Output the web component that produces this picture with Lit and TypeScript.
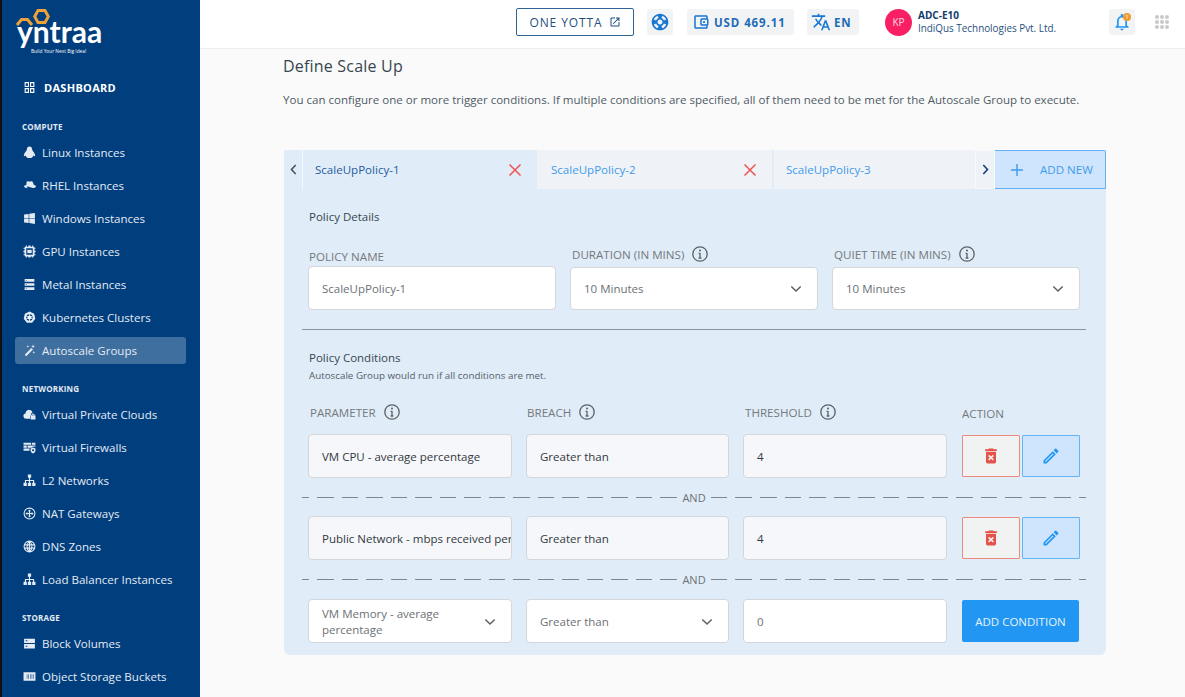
import { LitElement, css, html, svg } from 'lit';
import { customElement } from 'lit/decorators.js';

const ICONS: Record<string, unknown> = {
  linux: svg`<path d="M12 1c-3 0-4.800 2.200-4.800 5 0 1.500-.7 2.500-2 4C3.500 12 2 14.500 1.500 17.500c-.2 1.300.8 1.800 1.700 1.100l1.600-1.100c.6 2 2.200 3.500 4 4.500h6.400c1.800-1 3.400-2.500 4-4.500l1.600 1.100c.9.7 1.900.2 1.700-1.100-.5-3-2-5.500-3.700-7.500-1.300-1.500-2-2.500-2-4 0-2.800-1.800-5-4.800-5z"/>`,
  rhel: svg`<path d="M8 4c1.500 0 2.700.8 4 .8S14.500 4 16 4c2 0 3 3 3.500 6 2.500 1 4.500 2.300 4.500 4 0 2-3 3-6 2.500-3-.5-6-2-9-2.600-1.500-.3-2.200.1-2.200.8 0 1 1.500 2 3.200 2.500-4.500.3-8-1.300-8-3.700 0-1.500 2-2.200 4-2C6.500 8 6.500 4 8 4z"/>`,
  windows: svg`<path d="M2 4.800l8.500-1.200v7.900H2zM11.600 3.400L22 2v9.500H11.600zM2 12.600h8.500v7.900L2 19.300zM11.600 12.600H22V22l-10.400-1.500z"/>`,
  gpu: svg`<path fill-rule="evenodd" d="M5 1h2v2h3V1h4v2h3V1h2v2a2 2 0 012 2h2v2h-2v3h2v4h-2v3h2v2h-2a2 2 0 01-2 2v2h-2v-2h-3v2h-4v-2H7v2H5v-2a2 2 0 01-2-2H1v-2h2v-3H1v-4h2V7H1V5h2a2 2 0 012-2V1zm1 5v12h12V6H6z"/><rect x="8" y="9" width="8" height="6"/>`,
  metal: svg`<path d="M3 2h18v5H3zM3 9.500h18v5H3zM3 17h18v5H3z"/><path fill="#003e7e" d="M5 4h2v1H5zM5 11.500h2v1H5zM5 19h2v1H5z"/>`,
  k8s: svg`<path fill-rule="evenodd" d="M12 1l8.600 4.100 2.100 9.300-5.900 7.500H7.200l-5.900-7.500 2.100-9.300L12 1zm0 5a6 6 0 100 12 6 6 0 000-12z"/><path d="M12 8.200a3.800 3.800 0 100 7.600 3.800 3.800 0 000-7.600z"/><path stroke="#fff" stroke-width="1.300" d="M12 5v14M5.500 9l13 6M18.500 9l-13 6"/>`,
  wand: svg`<path d="M15.500 7.500l2.800 2.800L6 22.600l-2.800-2.800zM18.500 1l1 2.500 2.500 1-2.500 1-1 2.500-1-2.500-2.500-1 2.500-1zM9 2l.7 1.800 1.800.7-1.800.7L9 7l-.7-1.800-1.800-.7 1.800-.7zM20 13l.7 1.800 1.800.7-1.800.7L20 18l-.7-1.800-1.800-.7 1.800-.7z"/>`,
  cloud: svg`<path d="M11 3a7 7 0 016.700 5 5 5 0 00-3.200 5.500 4 4 0 00-1.500 3V20H6a5 5 0 01-1.200-9.900A7 7 0 0111 3z"/><path d="M18.500 10a3 3 0 013 3v1h1.500v7H14v-7h1.500v-1a3 3 0 013-3zm0 1.800a1.300 1.300 0 00-1.300 1.300v.9h2.600v-.9a1.300 1.300 0 00-1.300-1.300z"/>`,
  firewall: svg`<path d="M1 3h14v4H1zM16.500 3H23v4h-6.500zM1 8.500h6v4H1zM8.500 8.500H23v2a6 6 0 00-7 2H8.500zM1 14h11.500a6 6 0 00-.5 4H1z"/><path fill-rule="evenodd" d="M18.500 12l4.500 2v3.500c0 2.600-2 4.700-4.500 5.500-2.500-.8-4.500-2.900-4.500-5.500V14l4.500-2zm0 3a2 2 0 100 4 2 2 0 000-4z"/>`,
  sitemap: svg`<path d="M9 1h6v6h-2v4h7.500v5H23v6h-6v-6h1.500v-3h-5.500v3h2v6H9v-6h2v-3H5.500v3H7v6H1v-6h2.500v-5H11V7H9z"/>`,
  nat: svg`<path fill-rule="evenodd" d="M12 1a11 11 0 110 22 11 11 0 010-22zm0 2a9 9 0 100 18 9 9 0 000-18z"/><path d="M12 4.500L15 8h-2v3h3V9l3.500 3-3.500 3v-2h-3v3h2l-3 3.500L9 16h2v-3H8v2l-3.500-3L8 9v2h3V8H9z"/>`,
  globe: svg`<path fill="none" stroke="currentColor" stroke-width="2" d="M12 2a10 10 0 100 20 10 10 0 000-20zM12 2c-6 5-6 15 0 20M12 2c6 5 6 15 0 20M2.500 9h19M2.500 15h19M12 2v20"/>`,
  block: svg`<path fill-rule="evenodd" d="M2 3h20v8H2zm3 3v2h3V6zM2 13h20v8H2zm3 3v2h3v-2z"/>`,
  bucket: svg`<path fill-rule="evenodd" d="M1 4h22v16H1zm6 4v8h1V8zm3 0v8h1V8zm3 0v8h1V8zm3 0v8h1V8zm3 0v8h1V8z"/>`,
  dash: svg`<path fill-rule="evenodd" d="M3 2h8v9H3zm2 2v5h4V4zM13 2h8v9h-8zm2 2v5h4V4zM3 13h8v9H3zm2 2v5h4v-5zM13 13h8v9h-8zm2 2v5h4v-5z"/>`,
};

const SECTIONS = [
  {
    title: 'COMPUTE',
    items: [
      ['linux', 'Linux Instances'],
      ['rhel', 'RHEL Instances'],
      ['windows', 'Windows Instances'],
      ['gpu', 'GPU Instances'],
      ['metal', 'Metal Instances'],
      ['k8s', 'Kubernetes Clusters'],
      ['wand', 'Autoscale Groups'],
    ],
  },
  {
    title: 'NETWORKING',
    items: [
      ['cloud', 'Virtual Private Clouds'],
      ['firewall', 'Virtual Firewalls'],
      ['sitemap', 'L2 Networks'],
      ['nat', 'NAT Gateways'],
      ['globe', 'DNS Zones'],
      ['sitemap', 'Load Balancer Instances'],
    ],
  },
  {
    title: 'STORAGE',
    items: [
      ['block', 'Block Volumes'],
      ['bucket', 'Object Storage Buckets'],
    ],
  },
];

const icon = (name: string) => html`<svg class="nav-icon" viewBox="0 0 24 24" fill="currentColor">${ICONS[name]}</svg>`;

const infoIcon = html`<svg class="info" viewBox="0 0 16 16" fill="none" stroke="currentColor">
  <circle cx="8" cy="8" r="7.200" stroke-width="1.300"></circle>
  <path d="M8 7v5M6.600 7.300H8M6.600 12h2.800" stroke-width="1.300"></path>
  <circle cx="8" cy="4.500" r="1" fill="currentColor" stroke="none"></circle>
</svg>`;

const chevron = html`<svg class="chevron" viewBox="0 0 12 8" fill="none" stroke="currentColor" stroke-width="1.500">
  <path d="M1.300 1.500L6 6l4.700-4.500"></path>
</svg>`;

const closeIcon = html`<svg class="close" viewBox="0 0 14 14" fill="none" stroke="currentColor" stroke-width="1.500">
  <path d="M1.500 1.500l11 11M12.500 1.500l-11 11"></path>
</svg>`;

const trashIcon = html`<svg viewBox="0 0 24 24" width="20" height="20" fill="currentColor">
  <path d="M6 19c0 1.100.9 2 2 2h8c1.100 0 2-.9 2-2V7H6v12zm2.460-7.120l1.410-1.410L12 12.590l2.120-2.120 1.410 1.410L13.410 14l2.120 2.120-1.410 1.410L12 15.410l-2.120 2.120-1.410-1.410L10.590 14l-2.130-2.120zM15.500 4l-1-1h-5l-1 1H5v2h14V4z"></path>
</svg>`;

const editIcon = html`<svg viewBox="0 0 24 24" width="20" height="20" fill="currentColor">
  <path d="M3 17.250V21h3.750L17.810 9.940l-3.750-3.750L3 17.250zM5.920 19H5v-.92l9.060-9.060.92.92L5.920 19zM20.710 7.040c.39-.39.39-1.020 0-1.410l-2.340-2.340c-.2-.2-.45-.29-.71-.29s-.51.1-.7.29l-1.830 1.830 3.750 3.750 1.830-1.830z"></path>
</svg>`;

@customElement('app-root')
export class AppRoot extends LitElement {
  static styles = css`
    :host {
      display: block;
      height: 697px;
      overflow: hidden;
      font-family: 'Open Sans', sans-serif;
      background: #fafafa;
    }
    .page {
      display: flex;
      height: 697px;
    }

    /* sidebar */
    .sidebar {
      flex: 0 0 198px;
      display: flex;
      flex-direction: column;
      border-left: 2px solid #111;
      background: #003e7e;
      color: #e4ebf3;
      overflow: hidden;
    }
    .sidebar > * {
      flex: none;
    }
    .logo {
      height: 70px;
      padding: 8px 0 0 13px;
      box-sizing: border-box;
    }
    .logo-mark {
      position: relative;
      width: 90px;
      height: 50px;
    }
    .logo-mark svg {
      display: block;
    }
    .logo-text {
      position: absolute;
      left: 2px;
      top: 8px;
      font-family: Lato, sans-serif;
      font-size: 30px;
      font-weight: 700;
      line-height: 30px;
      color: #fff;
    }
    .logo-tag {
      position: absolute;
      left: 16px;
      top: 40px;
      font-size: 4.800px;
      line-height: 6px;
      color: #fff;
      white-space: nowrap;
    }
    .dash-row {
      display: flex;
      align-items: center;
      gap: 8px;
      height: 34px;
      margin-bottom: 1px;
      padding-left: 21px;
      font-size: 11px;
      font-weight: 700;
      color: #fff;
      letter-spacing: 0.300px;
    }
    .section {
      margin: 15px 0 2px 20px;
      height: 14px;
      line-height: 14px;
      font-size: 8px;
      font-weight: 700;
      color: #e4ebf3;
      letter-spacing: 0.200px;
    }
    .item {
      display: flex;
      align-items: center;
      gap: 6px;
      height: 27px;
      margin: 3px 14px 3px 13px;
      padding-left: 8px;
      border-radius: 3px;
      font-size: 11.550px;
      white-space: nowrap;
    }
    .item.active {
      background: #3f6f9f;
    }
    .nav-icon {
      flex: none;
      width: 13px;
      height: 13px;
    }

    /* top bar */
    .content {
      flex: 1;
      min-width: 0;
      display: flex;
      flex-direction: column;
    }
    .topbar {
      flex: 0 0 49px;
      box-sizing: border-box;
      display: flex;
      align-items: center;
      padding: 0 16px 4px 316px;
      background: #fff;
      border-bottom: 1px solid #eeeeee;
    }
    .one-yotta {
      display: flex;
      align-items: center;
      justify-content: center;
      gap: 6px;
      box-sizing: border-box;
      width: 118px;
      height: 28px;
      border: 1px solid #2f6395;
      border-radius: 2px;
      color: #1f4f80;
      font-size: 12px;
      letter-spacing: 0.900px;
    }
    .chip {
      display: flex;
      align-items: center;
      justify-content: center;
      gap: 5px;
      height: 26px;
      margin-left: 13px;
      border-radius: 3px;
      background: #f1f3f4;
      color: #1976d2;
      font-size: 11.500px;
      font-weight: 700;
      letter-spacing: 0.900px;
    }
    .chip.square {
      width: 26px;
    }
    .chip.usd {
      box-sizing: border-box;
      width: 107px;
      margin-left: 14px;
      justify-content: flex-start;
      gap: 4px;
      padding-left: 5px;
      color: #1f6cb5;
    }
    .chip.lang {
      width: 52px;
      box-sizing: border-box;
      justify-content: flex-start;
      gap: 3px;
      padding-left: 4px;
      color: #1f6cb5;
    }
    .avatar {
      flex: none;
      width: 27px;
      height: 27px;
      margin-left: 26px;
      border-radius: 50%;
      background: #f91f64;
      color: #ffd5e2;
      font-size: 10px;
      line-height: 27px;
      text-align: center;
    }
    .user {
      width: 191px;
      margin-left: 6px;
      color: #1f4f80;
      font-size: 9.900px;
      line-height: 13px;
      white-space: nowrap;
    }
    .user b {
      display: block;
      color: #0e3c6e;
      font-size: 10px;
    }
    .bell {
      position: relative;
      margin-left: 0;
      color: #2196f3;
    }
    .badge {
      position: absolute;
      top: 4px;
      right: 4px;
      width: 8px;
      height: 8px;
      border-radius: 50%;
      background: #f39a2c;
      color: #fff;
      font-size: 6px;
      font-weight: 400;
      letter-spacing: 0;
      line-height: 8px;
      text-align: center;
    }
    .apps {
      display: grid;
      grid-template-columns: repeat(3, 4px);
      grid-auto-rows: 4px;
      gap: 1px;
      margin-left: 20px;
    }
    .apps i {
      border-radius: 50%;
      background: #c9c9c9;
    }

    /* main */
    main {
      flex: 1;
      padding: 0 79px 0 83px;
      color: #2e3b49;
    }
    h1 {
      margin: 6px 0 0;
      font-size: 16px;
      line-height: 22px;
      font-weight: 400;
      color: #37474f;
      letter-spacing: 0.200px;
    }
    .lead {
      margin: 15px 0 0;
      font-size: 11.540px;
      line-height: 16px;
      color: #4f5b66;
      white-space: nowrap;
    }
    .card {
      margin: 42px 0 0 1px;
      height: 505px;
      border-radius: 0 0 6px 6px;
      background: #e0ecf8;
    }
    .tabs {
      display: flex;
      height: 39px;
      font-size: 11.550px;
    }
    .arrow {
      flex: none;
      display: flex;
      align-items: center;
      justify-content: center;
      box-sizing: border-box;
      color: #4a5560;
    }
    .arrow.prev {
      width: 19px;
      border-right: 1px solid #f4f8fc;
    }
    .arrow.next {
      width: 20px;
      background: #eff2f7;
      border: 1px solid #f7f9fb;
      color: #163f7a;
    }
    .arrow svg {
      width: 7px;
      height: 11px;
    }
    .tab {
      box-sizing: border-box;
      display: flex;
      align-items: center;
      justify-content: space-between;
      padding: 0 15px 0 12px;
      background: #eff2f7;
      color: #3f9bea;
    }
    .tab.one {
      flex: 0 0 234px;
      background: #e0ecf8;
      color: #1f5c9c;
    }
    .tab.two {
      flex: 0 0 237px;
      border-right: 2px solid #e0ecf8;
      padding: 0 15px 0 14px;
    }
    .tab.three {
      flex: 0 0 201px;
    }
    .close {
      width: 14px;
      height: 14px;
      color: #ef5350;
    }
    .add {
      flex: 1;
      box-sizing: border-box;
      display: flex;
      align-items: center;
      gap: 17px;
      padding-left: 16px;
      background: #cfe5fd;
      border: solid #64b0f2;
      border-width: 1px 1px 1px 0;
      border-radius: 0 2px 0 0;
      color: #3f9bea;
    }
    .add svg {
      width: 12px;
      height: 12px;
    }

    .body {
      padding: 0 26px 0 24px;
    }
    .heading {
      height: 18px;
      padding-left: 1px;
      line-height: 18px;
      font-size: 11.500px;
      color: #37474f;
    }
    .heading.first {
      padding-top: 19px;
    }
    .heading.second {
      margin-top: 19px;
    }
    .fields {
      display: grid;
      grid-template-columns: repeat(3, 248px);
      column-gap: 14px;
      margin-top: 18px;
    }
    .label {
      display: flex;
      align-items: center;
      gap: 8px;
      height: 20px;
      padding-left: 2px;
      font-size: 11.600px;
      color: #75797d;
      white-space: nowrap;
    }
    .label.tight {
      padding-left: 1px;
    }
    .label.name {
      height: 16px;
      padding: 4px 0 0 1px;
    }
    .label.action {
      height: 18px;
      padding: 2px 0 0 1px;
    }
    .info {
      flex: none;
      width: 16px;
      height: 16px;
      color: #5c6064;
    }
    .box {
      box-sizing: border-box;
      display: flex;
      align-items: center;
      justify-content: space-between;
      gap: 8px;
      height: 44px;
      padding: 1px 15px 0 13px;
      border: 1px solid #d3d6da;
      border-radius: 4px;
      background: #fff;
      font-size: 11.500px;
      line-height: 16px;
      color: #6c7175;
      overflow: hidden;
    }
    .box.name {
      margin-top: 2px;
    }
    .box.select {
      margin-top: 3px;
      height: 43px;
    }
    .box.locked {
      background: #f5f7fa;
      color: #33393f;
      white-space: nowrap;
      padding-right: 0;
    }
    .chevron {
      flex: none;
      width: 12px;
      height: 8px;
      color: #5c6064;
    }
    .rule {
      height: 1px;
      margin: 19px -6px 0;
      background: #8a949e;
    }
    .small {
      margin-top: 2px;
      padding-left: 1px;
      font-size: 9.800px;
      line-height: 13px;
      color: #56606a;
    }
    .grid {
      display: grid;
      grid-template-columns: 204px 203px 204px 119px;
      column-gap: 14px;
    }
    .grid.head {
      margin: 20px 0 12px;
    }
    .and {
      display: flex;
      align-items: center;
      gap: 5px;
      height: 38px;
      margin: 0 -6px;
      font-size: 11px;
      color: #6c7175;
    }
    .and.wide {
      height: 39px;
    }
    .dash {
      flex: 1;
      height: 1px;
      background: repeating-linear-gradient(to right, #7d8791 0 16.500px, transparent 16.500px 24.500px);
    }
    .dash.rev {
      background: repeating-linear-gradient(to left, #7d8791 0 16.500px, transparent 16.500px 24.500px);
    }
    .actions {
      display: flex;
      align-items: center;
      gap: 2px;
      height: 44px;
      margin-left: 1px;
    }
    .act {
      box-sizing: border-box;
      flex: none;
      display: flex;
      align-items: center;
      justify-content: center;
      height: 42px;
      border: 1px solid;
      border-radius: 1px;
    }
    .act.del {
      width: 58px;
      background: #f1f3f3;
      border-color: #ef8a80;
      color: #e4524a;
    }
    .act.edit {
      width: 58px;
      background: #cfe5fd;
      border-color: #64b5f6;
      color: #2196f3;
    }
    .add-cond {
      display: flex;
      align-items: center;
      justify-content: center;
      width: 117px;
      height: 42px;
      margin: 1px 0 0 1px;
      border-radius: 2px;
      background: #2196f3;
      color: #e8f3fd;
      font-size: 11.500px;
    }
  `;

  private conditionRow(param: string, threshold: string) {
    return html`
      <div class="grid">
        <div class="box locked">${param}</div>
        <div class="box locked">Greater than</div>
        <div class="box locked">${threshold}</div>
        <div class="actions">
          <div class="act del">${trashIcon}</div>
          <div class="act edit">${editIcon}</div>
        </div>
      </div>
    `;
  }

  private andLine(wide = false) {
    return html`<div class="and ${wide ? 'wide' : ''}"><span class="dash rev"></span>AND<span class="dash"></span></div>`;
  }

  private renderSidebar() {
    return html`
      <aside class="sidebar">
        <div class="logo">
          <div class="logo-mark">
            <svg width="40" height="20" viewBox="0 0 40 20" fill="none" stroke="#eda13a" stroke-width="3">
              <path d="M19.700 8.500L23 2.500h7l3.300 6-3.300 6h-7z"></path>
              <path d="M2 17l4.500-5.500h6L17 17"></path>
            </svg>
            <div class="logo-text">yntraa</div>
            <div class="logo-tag">Build Your Next Big Idea!</div>
          </div>
        </div>
        <div class="dash-row">${icon('dash')}DASHBOARD</div>
        ${SECTIONS.map(
          (s) => html`
            <div class="section">${s.title}</div>
            ${s.items.map(
              ([ic, label]) => html`
                <div class="item ${label === 'Autoscale Groups' ? 'active' : ''}">${icon(ic)}${label}</div>
              `
            )}
          `
        )}
      </aside>
    `;
  }

  private renderTopbar() {
    return html`
      <header class="topbar">
        <div class="one-yotta">
          ONE YOTTA
          <svg viewBox="0 0 24 24" width="12" height="12" fill="currentColor">
            <path d="M19 19H5V5h7V3H5c-1.110 0-2 .9-2 2v14c0 1.100.89 2 2 2h14c1.100 0 2-.9 2-2v-7h-2v7zM14 3v2h3.590l-9.830 9.830 1.410 1.410L19 6.410V10h2V3h-7z"></path>
          </svg>
        </div>
        <div class="chip square">
          <svg viewBox="0 0 24 24" width="20" height="20" fill="currentColor">
            <path d="M12 2C6.480 2 2 6.480 2 12s4.480 10 10 10 10-4.480 10-10S17.520 2 12 2zm7.460 7.120l-2.780 1.150c-.51-1.360-1.580-2.440-2.950-2.940l1.150-2.780c2.100.8 3.770 2.470 4.580 4.570zM12 15c-1.660 0-3-1.340-3-3s1.340-3 3-3 3 1.340 3 3-1.340 3-3 3zM9.130 4.540l1.170 2.780c-1.380.5-2.470 1.590-2.980 2.970L4.540 9.130c.81-2.110 2.480-3.780 4.590-4.590zM4.540 14.870l2.780-1.150c.51 1.380 1.590 2.460 2.970 2.960l-1.170 2.780c-2.100-.81-3.770-2.480-4.580-4.590zm10.340 4.590l-1.150-2.780c1.370-.51 2.450-1.590 2.950-2.970l2.780 1.170c-.81 2.100-2.480 3.770-4.580 4.580z"></path>
          </svg>
        </div>
        <div class="chip usd">
          <svg viewBox="0 0 24 24" width="18" height="18" fill="#1976d2">
            <path d="M21 7.280V5c0-1.100-.9-2-2-2H5c-1.110 0-2 .9-2 2v14c0 1.100.89 2 2 2h14c1.100 0 2-.9 2-2v-2.280c.59-.35 1-.98 1-1.720V9c0-.74-.41-1.370-1-1.720zM20 9v6h-7V9h7zM5 19V5h14v2h-6c-1.100 0-2 .9-2 2v6c0 1.100.9 2 2 2h6v2H5z"></path>
            <circle cx="16" cy="12" r="1.500"></circle>
          </svg>
          USD 469.11
        </div>
        <div class="chip lang">
          <svg viewBox="0 0 24 24" width="20" height="20" fill="#1976d2">
            <path d="M12.870 15.070l-2.540-2.510.03-.03c1.740-1.940 2.980-4.170 3.710-6.530H17V4h-7V2H8v2H1v1.990h11.170C11.500 7.920 10.440 9.750 9 11.350 8.070 10.320 7.300 9.190 6.690 8h-2c.73 1.630 1.730 3.170 2.980 4.560l-5.090 5.020L4 19l5-5 3.110 3.110.76-2.040zM18.500 10h-2L12 22h2l1.120-3h4.750L21 22h2l-4.500-12zm-2.620 7l1.620-4.330L19.120 17h-3.240z"></path>
          </svg>
          EN
        </div>
        <div class="avatar">KP</div>
        <div class="user"><b>ADC-E10</b>IndiQus Technologies Pvt. Ltd.</div>
        <div class="chip square bell">
          <svg viewBox="0 0 24 24" width="20" height="20" fill="currentColor">
            <path d="M12 22c1.100 0 2-.9 2-2h-4c0 1.100.89 2 2 2zm6-6v-5c0-3.070-1.640-5.640-4.500-6.320V4c0-.83-.67-1.500-1.500-1.500s-1.500.67-1.500 1.500v.68C7.630 5.360 6 7.920 6 11v5l-2 2v1h16v-1l-2-2zm-2 1H8v-6c0-2.480 1.510-4.500 4-4.500s4 2.020 4 4.500v6z"></path>
          </svg>
          <span class="badge">1</span>
        </div>
        <div class="apps">${Array.from({ length: 9 }, () => html`<i></i>`)}</div>
      </header>
    `;
  }

  render() {
    return html`
      <div class="page">
        ${this.renderSidebar()}
        <div class="content">
          ${this.renderTopbar()}
          <main>
            <h1>Define Scale Up</h1>
            <p class="lead">
              You can configure one or more trigger conditions. If multiple conditions are specified, all of them need to be met for the Autoscale Group to execute.
            </p>
            <section class="card">
              <div class="tabs">
                <div class="arrow prev">
                  <svg viewBox="0 0 7 11" fill="none" stroke="currentColor" stroke-width="1.600"><path d="M5.700 1L1.500 5.500 5.700 10"></path></svg>
                </div>
                <div class="tab one">ScaleUpPolicy-1 ${closeIcon}</div>
                <div class="tab two">ScaleUpPolicy-2 ${closeIcon}</div>
                <div class="tab three">ScaleUpPolicy-3</div>
                <div class="arrow next">
                  <svg viewBox="0 0 7 11" fill="none" stroke="currentColor" stroke-width="1.600"><path d="M1.300 1l4.200 4.500L1.300 10"></path></svg>
                </div>
                <div class="add">
                  <svg viewBox="0 0 12 12" fill="none" stroke="currentColor" stroke-width="1.400"><path d="M6 0v12M0 6h12"></path></svg>
                  ADD NEW
                </div>
              </div>
              <div class="body">
                <div class="heading first">Policy Details</div>
                <div class="fields">
                  <div>
                    <div class="label name">POLICY NAME</div>
                    <div class="box name">ScaleUpPolicy-1</div>
                  </div>
                  <div>
                    <div class="label">DURATION (IN MINS) ${infoIcon}</div>
                    <div class="box select">10 Minutes ${chevron}</div>
                  </div>
                  <div>
                    <div class="label">QUIET TIME (IN MINS) ${infoIcon}</div>
                    <div class="box select">10 Minutes ${chevron}</div>
                  </div>
                </div>
                <div class="rule"></div>
                <div class="heading second">Policy Conditions</div>
                <div class="small">Autoscale Group would run if all conditions are met.</div>
                <div class="grid head">
                  <div class="label">PARAMETER ${infoIcon}</div>
                  <div class="label tight">BREACH ${infoIcon}</div>
                  <div class="label">THRESHOLD ${infoIcon}</div>
                  <div class="label action">ACTION</div>
                </div>
                ${this.conditionRow('VM CPU - average percentage', '4')}
                ${this.andLine()}
                ${this.conditionRow('Public Network - mbps received per', '4')}
                ${this.andLine(true)}
                <div class="grid">
                  <div class="box">VM Memory - average percentage ${chevron}</div>
                  <div class="box">Greater than ${chevron}</div>
                  <div class="box">0</div>
                  <div class="add-cond">ADD CONDITION</div>
                </div>
              </div>
            </section>
          </main>
        </div>
      </div>
    `;
  }
}

declare global {
  interface HTMLElementTagNameMap {
    'app-root': AppRoot;
  }
}
